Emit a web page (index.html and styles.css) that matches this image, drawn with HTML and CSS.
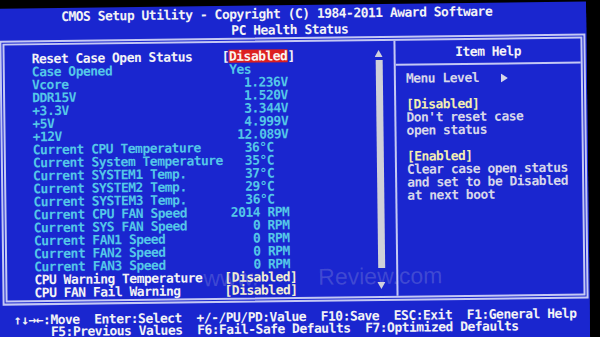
FILE: index.html
```html
<!DOCTYPE html>
<html lang="en">
<head>
<meta charset="utf-8">
<title>CMOS Setup Utility - PC Health Status</title>
<link rel="stylesheet" href="styles.css">
</head>
<body>
<div class="screen">
  <header class="title">
    <div class="t1">CMOS Setup Utility - Copyright (C) 1984-2011 Award Software</div>
    <div class="t2">PC Health Status</div>
  </header>
  <div class="frame">
    <section class="main">
      <div class="rows">
        <div class="row w"><span class="lbl">Reset Case Open Status</span><span class="val">[<span class="sel">Disabled</span>]</span></div>
        <div class="row c"><span class="lbl">Case Opened</span><span class="val"> Yes</span></div>
        <div class="row c"><span class="lbl">Vcore</span><span class="val">   1.236V</span></div>
        <div class="row c"><span class="lbl">DDR15V</span><span class="val">   1.520V</span></div>
        <div class="row c"><span class="lbl">+3.3V</span><span class="val">   3.344V</span></div>
        <div class="row c"><span class="lbl">+5V</span><span class="val">   4.999V</span></div>
        <div class="row c"><span class="lbl">+12V</span><span class="val">  12.089V</span></div>
        <div class="row c"><span class="lbl">Current CPU Temperature</span><span class="val">   36°C</span></div>
        <div class="row c"><span class="lbl">Current System Temperature</span><span class="val">   35°C</span></div>
        <div class="row c"><span class="lbl">Current SYSTEM1 Temp.</span><span class="val">   37°C</span></div>
        <div class="row c"><span class="lbl">Current SYSTEM2 Temp.</span><span class="val">   29°C</span></div>
        <div class="row c"><span class="lbl">Current SYSTEM3 Temp.</span><span class="val">   36°C</span></div>
        <div class="row c"><span class="lbl">Current CPU FAN Speed</span><span class="val"> 2014 RPM</span></div>
        <div class="row c"><span class="lbl">Current SYS FAN Speed</span><span class="val">    0 RPM</span></div>
        <div class="row c"><span class="lbl">Current FAN1 Speed</span><span class="val">    0 RPM</span></div>
        <div class="row c"><span class="lbl">Current FAN2 Speed</span><span class="val">    0 RPM</span></div>
        <div class="row c"><span class="lbl">Current FAN3 Speed</span><span class="val">    0 RPM</span></div>
        <div class="row w"><span class="lbl">CPU Warning Temperature</span><span class="val y">[Disabled]</span></div>
        <div class="row w"><span class="lbl">CPU FAN Fail Warning</span><span class="val y">[Disabled]</span></div>
      </div>
      <div class="scroll">
        <svg class="arrow" viewBox="0 0 8 7" width="8" height="7"><polygon points="4,0 8,7 0,7" fill="#d0d0dc"/></svg>
        <div class="thumb"></div>
        <svg class="arrow down" viewBox="0 0 8 7" width="8" height="7"><polygon points="0,0 8,0 4,7" fill="#d0d0dc"/></svg>
      </div>
      <div class="watermark"><span>www.</span><span class="wm2">Review.com</span></div>
    </section>
    <aside class="help">
      <div class="help-title">Item Help</div>
      <div class="help-body">
        <div class="hl">Menu Level   <svg class="tri" viewBox="0 0 7 9" width="7" height="9"><polygon points="0,0 7,4.5 0,9" fill="#d6d6ea"/></svg></div>
        <div class="hl"></div>
        <div class="hl y">[Disabled]</div>
        <div class="hl">Don't reset case</div>
        <div class="hl">open status</div>
        <div class="hl"></div>
        <div class="hl y">[Enabled]</div>
        <div class="hl">Clear case open status</div>
        <div class="hl">and set to be Disabled</div>
        <div class="hl">at next boot</div>
      </div>
    </aside>
  </div>
  <footer class="keys">
    <div class="kl">↑↓→←:Move  Enter:Select  +/-/PU/PD:Value  F10:Save  ESC:Exit  F1:General Help</div>
    <div class="kl indent">F5:Previous Values  F6:Fail-Safe Defaults  F7:Optimized Defaults</div>
  </footer>
</div>
</body>
</html>
```

FILE: styles.css
```css
html, body {
  margin: 0;
  padding: 0;
  background: #000;
  overflow: hidden;
  width: 600px;
  height: 337px;
}

.screen {
  box-sizing: border-box;
  width: 608px;
  height: 332px;
  margin: 5px 0 0 -20px;
  padding: 0 0 0 20px;
  background: #1a26cf;
  box-shadow: 0 12px 0 0 #1a26cf;
  transform: rotate(-0.7deg);
  transform-origin: 320px 165px;
  font-family: "DejaVu Sans Mono", "Liberation Mono", monospace;
  font-weight: bold;
  font-size: 13px;
  letter-spacing: -0.52px;
  line-height: 13px;
  color: #f2f2f6;
}

.title {
  padding-top: 2px;
  display: flex;
  flex-direction: column;
  gap: 3px;
  height: 32px;
  box-sizing: border-box;
}

.title div {
  white-space: pre;
}

.title .t1 {
  padding-left: 63px;
}

.title .t2 {
  padding-left: 233px;
}

.frame {
  margin-left: 1px;
  width: 586px;
  height: 265px;
  box-sizing: border-box;
  border: 5px double #c4c8f4;
  display: flex;
}

.main {
  position: relative;
  flex: 1;
  display: flex;
  padding: 7px 11px 1px 27px;
}

.rows {
  flex: 1;
}

.row {
  display: grid;
  grid-template-columns: 190px auto;
  height: 13px;
  white-space: pre;
}

.row.c { color: #54c6e8; }
.row.w { color: #f2f2f6; }
.val.y { color: #f2eed2; }

.sel {
  display: inline-block;
  background: #dd2020;
  color: #fbf4f0;
  height: 13px;
}

.scroll {
  width: 8px;
  display: flex;
  flex-direction: column;
  align-items: center;
}

.arrow {
  display: block;
  margin-top: 2px;
}

.thumb {
  width: 7px;
  height: 208px;
  margin-top: 3px;
  background: #cfd0d8;
}

.arrow.down {
  margin-top: auto;
  margin-bottom: 6px;
}

.watermark {
  position: absolute;
  left: 196px;
  top: 222px;
  font-family: "Liberation Sans", Arial, sans-serif;
  font-weight: normal;
  font-size: 23px;
  line-height: 26px;
  letter-spacing: 0;
  color: rgba(200, 200, 225, 0.22);
  white-space: pre;
}

.wm2 {
  margin-left: 60px;
}

.help {
  width: 185px;
  border-left: 2px solid #c4c8f4;
  display: flex;
  flex-direction: column;
}

.help-title {
  height: 23px;
  line-height: 23px;
  text-align: center;
  border-bottom: 2px solid #c4c8f4;
  color: #f2f2f6;
}

.help-body {
  padding: 6px 0 0 10px;
  color: #d6d6ea;
}

.hl {
  height: 13px;
  white-space: pre;
}

.hl.y {
  color: #f2eeb2;
}

.tri {
  vertical-align: -1px;
}

.keys {
  padding: 9px 0 0 12px;
  color: #f2f2f6;
}

.kl {
  white-space: pre;
  height: 12px;
  line-height: 12px;
}

.keys .indent {
  padding-left: 37px;
}
```
